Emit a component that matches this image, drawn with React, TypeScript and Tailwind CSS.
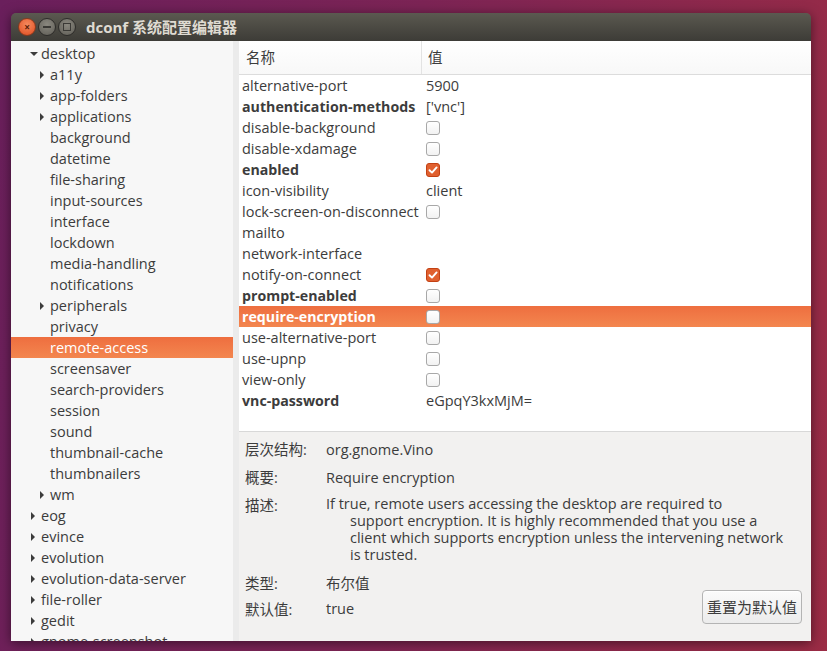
import React from "react";

const tree: { name: string; depth: number; arrow?: "down" | "right"; selected?: boolean }[] = [
  { name: "desktop", depth: 0, arrow: "down" },
  { name: "a11y", depth: 1, arrow: "right" },
  { name: "app-folders", depth: 1, arrow: "right" },
  { name: "applications", depth: 1, arrow: "right" },
  { name: "background", depth: 1 },
  { name: "datetime", depth: 1 },
  { name: "file-sharing", depth: 1 },
  { name: "input-sources", depth: 1 },
  { name: "interface", depth: 1 },
  { name: "lockdown", depth: 1 },
  { name: "media-handling", depth: 1 },
  { name: "notifications", depth: 1 },
  { name: "peripherals", depth: 1, arrow: "right" },
  { name: "privacy", depth: 1 },
  { name: "remote-access", depth: 1, selected: true },
  { name: "screensaver", depth: 1 },
  { name: "search-providers", depth: 1 },
  { name: "session", depth: 1 },
  { name: "sound", depth: 1 },
  { name: "thumbnail-cache", depth: 1 },
  { name: "thumbnailers", depth: 1 },
  { name: "wm", depth: 1, arrow: "right" },
  { name: "eog", depth: 0, arrow: "right" },
  { name: "evince", depth: 0, arrow: "right" },
  { name: "evolution", depth: 0, arrow: "right" },
  { name: "evolution-data-server", depth: 0, arrow: "right" },
  { name: "file-roller", depth: 0, arrow: "right" },
  { name: "gedit", depth: 0, arrow: "right" },
  { name: "gnome-screenshot", depth: 0, arrow: "right" },
];

type Val = string | { check: boolean };
const keys: { name: string; bold?: boolean; value: Val; selected?: boolean }[] = [
  { name: "alternative-port", value: "5900" },
  { name: "authentication-methods", bold: true, value: "['vnc']" },
  { name: "disable-background", value: { check: false } },
  { name: "disable-xdamage", value: { check: false } },
  { name: "enabled", bold: true, value: { check: true } },
  { name: "icon-visibility", value: "client" },
  { name: "lock-screen-on-disconnect", value: { check: false } },
  { name: "mailto", value: "" },
  { name: "network-interface", value: "" },
  { name: "notify-on-connect", value: { check: true } },
  { name: "prompt-enabled", bold: true, value: { check: false } },
  { name: "require-encryption", bold: true, value: { check: false }, selected: true },
  { name: "use-alternative-port", value: { check: false } },
  { name: "use-upnp", value: { check: false } },
  { name: "view-only", value: { check: false } },
  { name: "vnc-password", bold: true, value: "eGpqY3kxMjM=" },
];

const Checkbox: React.FC<{ checked: boolean }> = ({ checked }) =>
  checked ? (
    <span className="flex h-[14px] w-[14px] items-center justify-center rounded-[3px] border border-[#c34113] bg-[#e0602f]">
      <svg width="10" height="10" viewBox="0 0 10 10">
        <path d="M1.5 5.2 L4 7.6 L8.6 2.4" fill="none" stroke="#fff" strokeWidth="1.9" strokeLinecap="round" strokeLinejoin="round" />
      </svg>
    </span>
  ) : (
    <span className="block h-[14px] w-[14px] rounded-[3px] border border-[#a8a8a8] bg-gradient-to-b from-white to-[#f2f2f2]" />
  );

const App: React.FC = () => {
  return (
    <div
      className="h-[651px] w-[827px] overflow-hidden bg-[linear-gradient(100deg,#6a1f5c_0%,#7c2455_45%,#9b2c45_100%)] pl-[11px] pt-[13px]"
      style={{ fontFamily: '"Open Sans", "Noto Sans CJK SC", sans-serif' }}
    >
      <div className="flex h-[628px] w-[800px] flex-col overflow-hidden rounded-t-[5px] shadow-[0_2px_12px_rgba(0,0,0,0.5)]">
        {/* title bar */}
        <div className="flex h-[28px] items-center bg-gradient-to-b from-[#5b5950] to-[#3d3c37] pl-[7px]">
          <div className="flex items-center gap-[2px]">
            <span className="flex h-[18px] w-[18px] items-center justify-center rounded-full border border-[#8a3a1e] bg-[radial-gradient(circle_at_50%_35%,#f48a5e,#df4b1f)] text-[10px] font-bold leading-none text-[#5a1d08]">
              ×
            </span>
            <span className="flex h-[18px] w-[18px] items-center justify-center rounded-full border border-[#2e2d2a] bg-[radial-gradient(circle_at_50%_35%,#8a887f,#5f5d56)]">
              <span className="block h-[2px] w-[8px] bg-[#3a3935]" />
            </span>
            <span className="flex h-[18px] w-[18px] items-center justify-center rounded-full border border-[#2e2d2a] bg-[radial-gradient(circle_at_50%_35%,#8a887f,#5f5d56)]">
              <span className="block h-[8px] w-[8px] border-[1.5px] border-[#3a3935]" />
            </span>
          </div>
          <span className="ml-[10px] text-[15px] font-bold text-[#dfdbd2]">dconf 系统配置编辑器</span>
        </div>

        {/* body */}
        <div className="flex h-[600px]">
          {/* tree */}
          <div className="w-[222px] overflow-hidden bg-[#f7f7f7] pt-[2px]">
            {tree.map((t) => (
              <div
                key={t.name}
                className={`flex h-[21px] items-center text-[14.5px] ${
                  t.selected ? "bg-gradient-to-b from-[#ee6e3f] to-[#f3864f] text-white" : "text-[#3c3c3c]"
                }`}
                style={{ paddingLeft: t.depth === 0 ? 19 : 28 }}
              >
                <span className="flex w-[11px] items-center">
                  {t.arrow === "down" && (
                    <svg width="8" height="6" viewBox="0 0 8 6">
                      <path d="M0 1 L8 1 L4 5 Z" fill="#3c3c3c" />
                    </svg>
                  )}
                  {t.arrow === "right" && (
                    <svg width="6" height="8" viewBox="0 0 6 8">
                      <path d="M1 0 L5 4 L1 8 Z" fill="#3c3c3c" />
                    </svg>
                  )}
                </span>
                <span>{t.name}</span>
              </div>
            ))}
          </div>
          <div className="w-[6px] bg-[#ebebeb]" />

          {/* right pane */}
          <div className="flex w-[572px] flex-col">
            <div className="flex h-[390px] flex-col bg-white">
              <div className="flex h-[34px] border-b border-[#dcdcdc] bg-gradient-to-b from-white to-[#f8f8f8] text-[14.5px] text-[#3c3c3c]">
                <div className="flex w-[183px] items-center border-r border-[#e3e3e3] pl-[7px]">名称</div>
                <div className="flex items-center pl-[6px]">值</div>
              </div>
              {keys.map((k) => (
                <div
                  key={k.name}
                  className={`flex h-[21px] items-center ${
                    k.selected ? "bg-gradient-to-b from-[#ee6e3f] to-[#f3864f] text-white" : "text-[#3c3c3c]"
                  }`}
                >
                  <span className={`w-[184px] pl-[3px] ${k.bold ? "text-[14.2px] font-bold" : "text-[14.5px]"}`}>{k.name}</span>
                  <span className="pl-[3px] text-[14.5px]">
                    {typeof k.value === "string" ? k.value : <Checkbox checked={k.value.check} />}
                  </span>
                </div>
              ))}
            </div>
            <div className="flex flex-1 flex-col border-t border-[#d8d8d8] bg-[#f2f1f0] pl-[6px] pt-[7px] text-[14.5px] text-[#3c3c3c]">
              <div className="flex h-[28px]">
                <span className="w-[81px]">层次结构:</span>
                <span>org.gnome.Vino</span>
              </div>
              <div className="flex h-[28px]">
                <span className="w-[81px]">概要:</span>
                <span>Require encryption</span>
              </div>
              <div className="flex h-[78px]">
                <span className="w-[81px]">描述:</span>
                <div className="leading-[17px]">
                  <div>If true, remote users accessing the desktop are required to</div>
                  <div className="pl-[24px]">support encryption. It is highly recommended that you use a</div>
                  <div className="pl-[24px]">client which supports encryption unless the intervening network</div>
                  <div className="pl-[24px]">is trusted.</div>
                </div>
              </div>
              <div className="flex h-[25px]">
                <span className="w-[81px]">类型:</span>
                <span>布尔值</span>
              </div>
              <div className="flex items-start">
                <span className="w-[81px] pt-[1px]">默认值:</span>
                <span>true</span>
                <button className="ml-auto mr-[9px] mt-[-8px] flex h-[34px] w-[100px] items-center justify-center rounded-[4px] border border-[#b4b4b4] bg-gradient-to-b from-[#fbfbfb] to-[#ececec] text-[15px] text-[#3c3c3c] shadow-[inset_0_1px_0_#fff]">
                  重置为默认值
                </button>
              </div>
            </div>
          </div>
        </div>
      </div>
    </div>
  );
};

export default App;
